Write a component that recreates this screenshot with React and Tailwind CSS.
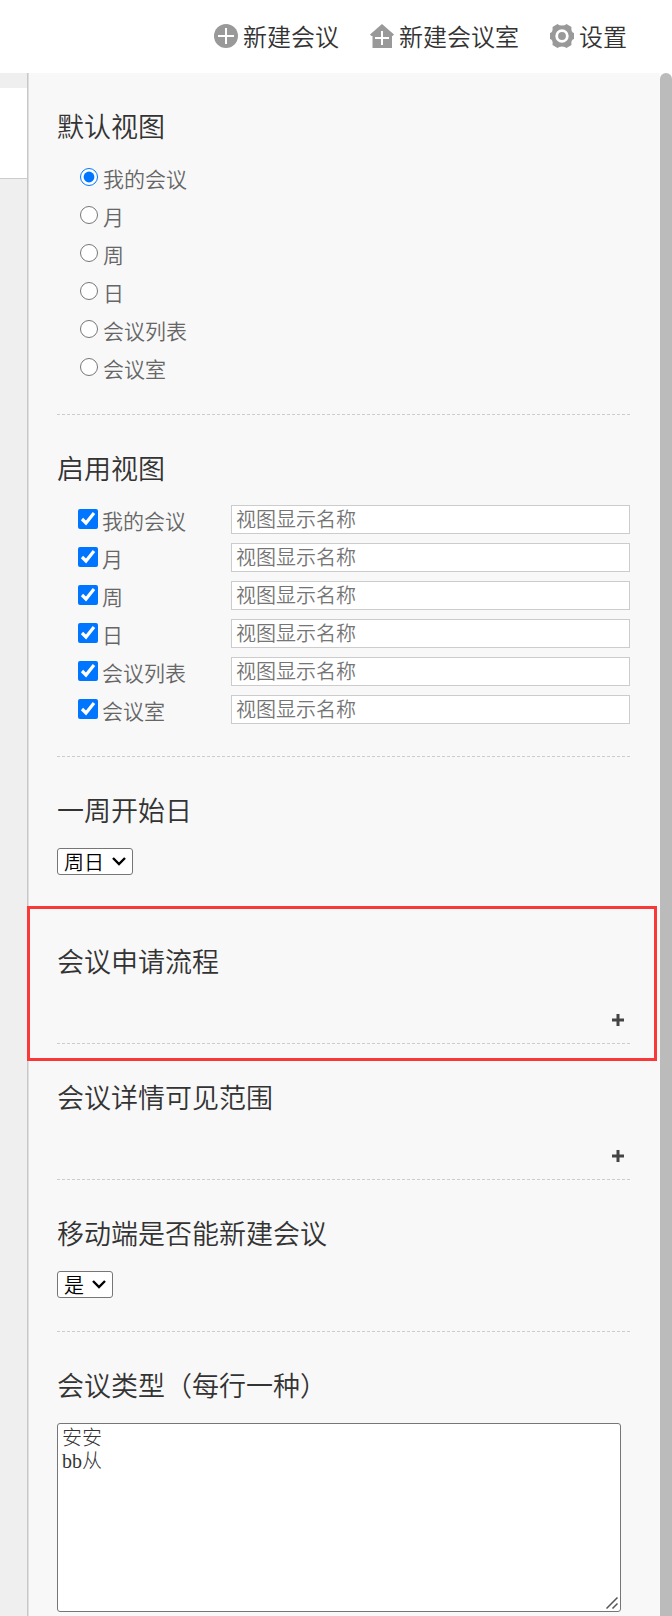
import { useState } from 'react'

const VIEWS = [
  { id: 'mine', name: '我的会议' },
  { id: 'month', name: '月' },
  { id: 'week', name: '周' },
  { id: 'day', name: '日' },
  { id: 'list', name: '会议列表' },
  { id: 'room', name: '会议室' },
]

function PlusCircleIcon() {
  return (
    <svg className="size-6" viewBox="0 0 24 24" aria-hidden="true">
      <circle cx="12" cy="12" r="12" fill="#999" />
      <path d="M12 4v16M4 12h16" stroke="#fff" strokeWidth="2" />
    </svg>
  )
}

function HousePlusIcon() {
  return (
    <svg className="size-6" viewBox="0 0 24 24" aria-hidden="true">
      <path d="M12 0 24 10.5 22.6 12H22v12.500H2.500V12H1.400L0 10.500Z" fill="#999" />
      <path d="M12 7v14M5 14h14" stroke="#fff" strokeWidth="2" />
    </svg>
  )
}

function GearIcon() {
  return (
    <svg className="size-6" viewBox="0 0 24 24" aria-hidden="true">
      <path
        d="M7.500 0Q9 1.500 12 1.500T16.500 0L21.500 3Q21 5.500 21.800 7.200T24 9V15Q22.600 15.200 21.800 16.800T21.500 21L16.500 24Q15 22.500 12 22.500T7.500 24L2.500 21Q3 18.500 2.200 16.800T0 15V9Q1.400 8.800 2.200 7.200T2.500 3Z"
        fill="#999"
      />
      <circle cx="12" cy="12" r="5.300" fill="#999" stroke="#fff" strokeWidth="2.800" />
    </svg>
  )
}

function HeaderButton({ icon, children }) {
  return (
    <button type="button" className="flex items-center gap-[5px] text-2xl leading-8 text-[#333]">
      {icon}
      {children}
    </button>
  )
}

function Section({ title, titleFor, children, className = '' }) {
  const Label = titleFor ? 'label' : 'span'
  return (
    <section className={`relative border-b border-dashed border-[#ccc] pt-[31px] ${className}`}>
      <h2 className="mb-px text-[27px] leading-11 text-[#333]">
        <Label htmlFor={titleFor}>{title}</Label>
      </h2>
      {children}
    </section>
  )
}

function Select({ id, options }) {
  return (
    <div className="relative mt-[15px] inline-flex">
      <select
        id={id}
        className="h-[27px] appearance-none rounded-[3px] border border-[#767676] bg-white pr-7 pl-1.5 text-xl leading-6 text-black"
      >
        {options.map(o => <option key={o}>{o}</option>)}
      </select>
      <svg className="pointer-events-none absolute top-2 right-1.5 h-2.5 w-4" viewBox="0 0 16 10" fill="none" aria-hidden="true">
        <path d="m2 2 6 6 6-6" stroke="#000" strokeWidth="2.400" />
      </svg>
    </div>
  )
}

function AddButton({ label }) {
  return (
    <div className="flex justify-end pt-[30px] pr-1.5 pb-[17px]">
      <button type="button" aria-label={label}>
        <svg className="size-3" viewBox="0 0 12 12" aria-hidden="true">
          <path d="M6 0v12M0 6h12" stroke="#444" strokeWidth="3" />
        </svg>
      </button>
    </div>
  )
}

export default function App() {
  const [defaultView, setDefaultView] = useState('mine')
  const [enabled, setEnabled] = useState(VIEWS.map(v => v.id))
  const [types, setTypes] = useState('安安\nbb从')

  const toggle = (id) => {
    setEnabled(enabled.includes(id) ? enabled.filter(x => x !== id) : [...enabled, id])
  }

  return (
    <div className="flex min-h-screen flex-col bg-white font-['Noto_Sans_CJK_SC',sans-serif] font-[350]">
      <header className="flex h-[73px] items-center justify-end gap-[31px] pr-[45px] pb-0.5">
        <HeaderButton icon={<PlusCircleIcon />}>新建会议</HeaderButton>
        <HeaderButton icon={<HousePlusIcon />}>新建会议室</HeaderButton>
        <HeaderButton icon={<GearIcon />}>设置</HeaderButton>
      </header>

      <div className="flex flex-1">
        <div className="w-[27px] shrink-0 bg-[#efefef] pt-[15px]">
          <div className="h-[91px] border-b border-[#ccc] bg-white" />
        </div>

        <main className="min-w-0 flex-1 border-l border-[#c8c8c8] bg-[#f8f8f8] pr-[30px] pb-1 pl-[29px] shadow-[inset_1px_0_#dedede]">
          <Section title="默认视图" className="pb-7">
            <div className="pt-[9px] pl-[23px]">
              {VIEWS.map(v => (
                <label key={v.id} className="flex h-[38px] items-center gap-[5px] text-[21px] text-[#666]">
                  <input
                    type="radio"
                    name="default-view"
                    checked={defaultView === v.id}
                    onChange={() => setDefaultView(v.id)}
                    className="size-[18px] accent-[#0075ff]"
                  />
                  <span className="pt-1">{v.name}</span>
                </label>
              ))}
            </div>
          </Section>

          <Section title="启用视图" className="pb-7">
            <div className="pt-[9px] pl-[21px]">
              {VIEWS.map(v => (
                <div key={v.id} className="flex h-[38px] items-center">
                  <label className="flex w-[153px] shrink-0 items-center gap-1 text-[21px] text-[#666]">
                    <input
                      type="checkbox"
                      checked={enabled.includes(v.id)}
                      onChange={() => toggle(v.id)}
                      className="size-5 accent-[#0075ff]"
                    />
                    <span className="pt-1">{v.name}</span>
                  </label>
                  <input
                    type="text"
                    aria-label={v.name}
                    placeholder="视图显示名称"
                    className="h-[29px] min-w-0 flex-1 border border-[#ccc] bg-white px-1 pb-0.5 text-xl leading-6 text-[#333] placeholder:text-[#757575]"
                  />
                </div>
              ))}
            </div>
          </Section>

          <Section title="一周开始日" titleFor="week-start" className="flex flex-col items-start pb-8">
            <Select id="week-start" options={['周日', '周一']} />
          </Section>

          <Section title="会议申请流程">
            <AddButton label="添加会议申请流程" />
            <div className="pointer-events-none absolute -top-0.5 -right-[27px] -bottom-[18px] -left-[30px] border-3 border-[#fb3838]" />
          </Section>

          <Section title="会议详情可见范围">
            <AddButton label="添加会议详情可见范围" />
          </Section>

          <Section title="移动端是否能新建会议" titleFor="mobile-create" className="flex flex-col items-start pb-[33px]">
            <Select id="mobile-create" options={['是', '否']} />
          </Section>

          <Section title="会议类型（每行一种）" titleFor="meeting-types" className="border-b-0">
            <div className="relative mt-4 mr-[9px]">
              <textarea
                id="meeting-types"
                value={types}
                onChange={(e) => setTypes(e.target.value)}
                className="block h-[189px] w-full resize-none rounded-[3px] border border-[#767676] bg-white px-1 py-[3px] font-['Liberation_Serif','Noto_Sans_CJK_SC',serif] text-xl leading-[23px] font-light text-[#333]"
              />
              <svg className="pointer-events-none absolute right-[3px] bottom-[3px] size-3" viewBox="0 0 12 12" aria-hidden="true">
                <path d="M.5 11.500 11.500.500M6.500 11.500l5-5" stroke="#555" strokeWidth="1.500" />
              </svg>
            </div>
          </Section>
        </main>

        <div className="w-3 shrink-0 rounded-t-md bg-[#bbb]" />
      </div>
    </div>
  )
}
